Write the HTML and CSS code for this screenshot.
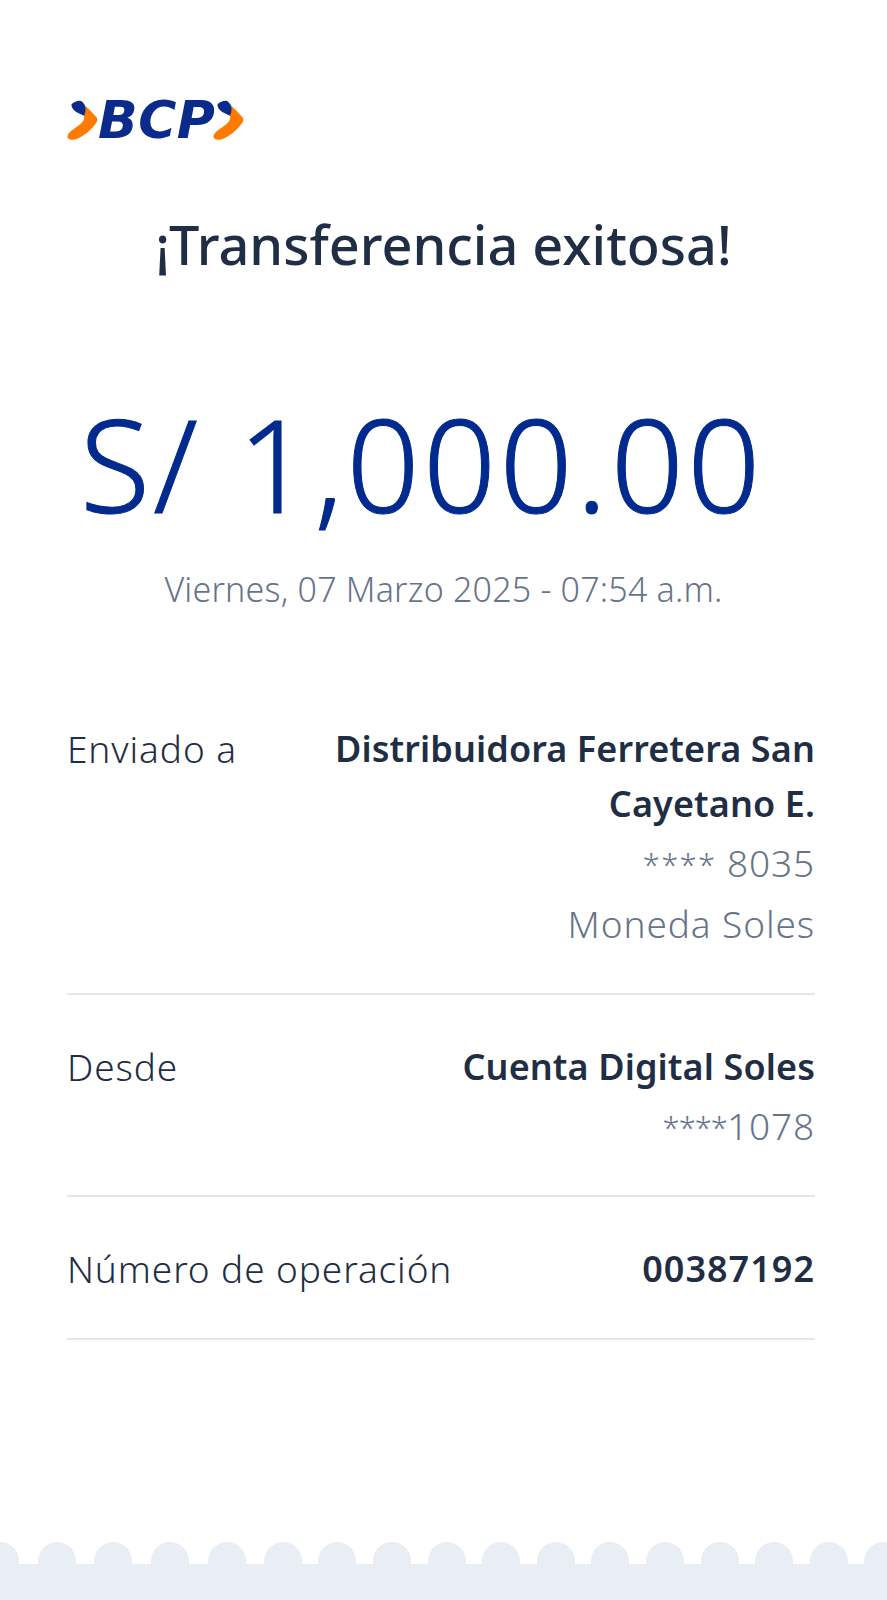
FILE: index.html
```html
<!DOCTYPE html>
<html lang="es">
<head>
<meta charset="utf-8">
<title>Transferencia exitosa</title>
<link rel="stylesheet" href="styles.css">
</head>
<body>
<main class="receipt">
  <header class="logo">
    <svg class="chev" viewBox="0 0 31 42" aria-hidden="true">
      <path d="M18 6.700 C22 10 27 15 30 19 C31 21 30 23 28 25.500 C23 32 16 38 8 40.500 C4 41.500 0 40 0.500 37 C1 35 2 34 4 32 C8 29 13 26 15.500 23 C17 21 17.500 19 17 16.700Z" fill="#ff7a00"/>
      <path d="M4.700 5 C7 3 10 1.500 13 1.700 C15 2 17 4.500 18 6.700 C19 10 18.500 14 17 16.700 C13 15 8 13 6 10 C5 8.500 4 6.500 4.700 5Z" fill="#0a2a8c"/>
    </svg>
    <span class="logo-text">BCP</span>
    <svg class="chev chev-end" viewBox="0 0 31 42" aria-hidden="true">
      <path d="M18 6.700 C22 10 27 15 30 19 C31 21 30 23 28 25.500 C23 32 16 38 8 40.500 C4 41.500 0 40 0.500 37 C1 35 2 34 4 32 C8 29 13 26 15.500 23 C17 21 17.500 19 17 16.700Z" fill="#ff7a00"/>
      <path d="M4.700 5 C7 3 10 1.500 13 1.700 C15 2 17 4.500 18 6.700 C19 10 18.500 14 17 16.700 C13 15 8 13 6 10 C5 8.500 4 6.500 4.700 5Z" fill="#0a2a8c"/>
    </svg>
  </header>
  <h1 class="title">¡Transferencia exitosa!</h1>
  <p class="amount">S/ 1,000.00</p>
  <p class="date">Viernes, 07 Marzo 2025 - 07:54 a.m.</p>
  <section class="rows">
    <div class="row row-sent">
      <div class="label">Enviado a</div>
      <div class="value">
        <div class="strong name">Distribuidora Ferretera San Cayetano E.</div>
        <div class="muted"><span class="stars spaced">****</span> 8035</div>
        <div class="muted">Moneda Soles</div>
      </div>
    </div>
    <div class="row row-from">
      <div class="label">Desde</div>
      <div class="value">
        <div class="strong">Cuenta Digital Soles</div>
        <div class="muted"><span class="stars">****</span>1078</div>
      </div>
    </div>
    <div class="row row-op">
      <div class="label">Número de operación</div>
      <div class="value"><div class="strong digits">00387192</div></div>
    </div>
  </section>
</main>
<footer class="edge" aria-hidden="true">
  <div class="bumps">
    <div class="bump-group wide"><i></i><i></i><i></i><i></i><i></i><i></i></div>
    <div class="bump-group"><i></i><i></i><i></i><i></i><i></i><i></i><i></i><i></i><i></i><i></i><i></i></div>
  </div>
  <div class="base"></div>
</footer>
</body>
</html>
```
FILE: styles.css
```css
* { box-sizing: border-box; }
html, body { margin: 0; padding: 0; background: #fff; }
body {
  width: 887px;
  height: 1600px;
  overflow: hidden;
  display: flex;
  flex-direction: column;
  font-family: "Noto Sans", sans-serif;
  color: #1f2e44;
}
.receipt { flex: 1; padding: 96px 67px 0; }
.logo { display: flex; align-items: center; height: 48px; }
.chev { width: 31px; height: 42px; flex: none; }
.logo-text {
  font-family: "DejaVu Sans", sans-serif;
  font-weight: 700;
  font-style: italic;
  font-size: 52px;
  line-height: 48px;
  letter-spacing: 0.5px;
  color: #0a2a8c;
}
.chev-end { margin-left: -2px; }
.title {
  margin: 65px 0 0;
  text-align: center;
  font-size: 54px;
  line-height: 70px;
  font-weight: 500;
}
.amount {
  margin: 110px 0 0 13px;
  font-size: 128px;
  line-height: 150px;
  font-weight: 300;
  letter-spacing: 3.400px;
  -webkit-text-stroke: 1px #002a8d;
  white-space: nowrap;
  color: #002a8d;
}
.date {
  margin: 28px 0 0;
  text-align: center;
  font-size: 34px;
  line-height: 44px;
  font-weight: 300;
  letter-spacing: 0.2px;
  color: #68748a;
}
.rows { margin: 110px 5px 0 0; }
.row {
  display: flex;
  justify-content: space-between;
  border-bottom: 2px solid #e4e6ea;
  font-size: 37px;
  letter-spacing: 0.9px;
  line-height: 55px;
}
.row-sent { height: 274px; }
.row-from { height: 202px; padding-top: 44px; }
.row-op { height: 143px; padding-top: 44px; }
.label { font-weight: 300; white-space: nowrap; }
.value { text-align: right; }
.name { width: 500px; margin-left: auto; }
.strong { font-size: 36px; letter-spacing: 0.1px; font-weight: 600; }
.digits { letter-spacing: 1px; }
.muted { font-weight: 300; color: #68748a; line-height: 60px; position: relative; top: 2px; }
.stars { font-size: 31px; letter-spacing: -1px; vertical-align: 1px; }
.stars.spaced { letter-spacing: 1.300px; }
.edge { flex: none; height: 58px; display: flex; flex-direction: column; }
.bumps { height: 22px; margin-left: -19px; display: flex; gap: 16px; }
.bump-group { display: flex; gap: 16.600px; }
.bump-group.wide { gap: 18.700px; }
.bump-group i {
  display: block;
  flex: none;
  width: 38px;
  height: 22px;
  border-radius: 19px 19px 0 0;
  background: #e9edf4;
}
.base { flex: 1; background: #e9edf4; }
```
